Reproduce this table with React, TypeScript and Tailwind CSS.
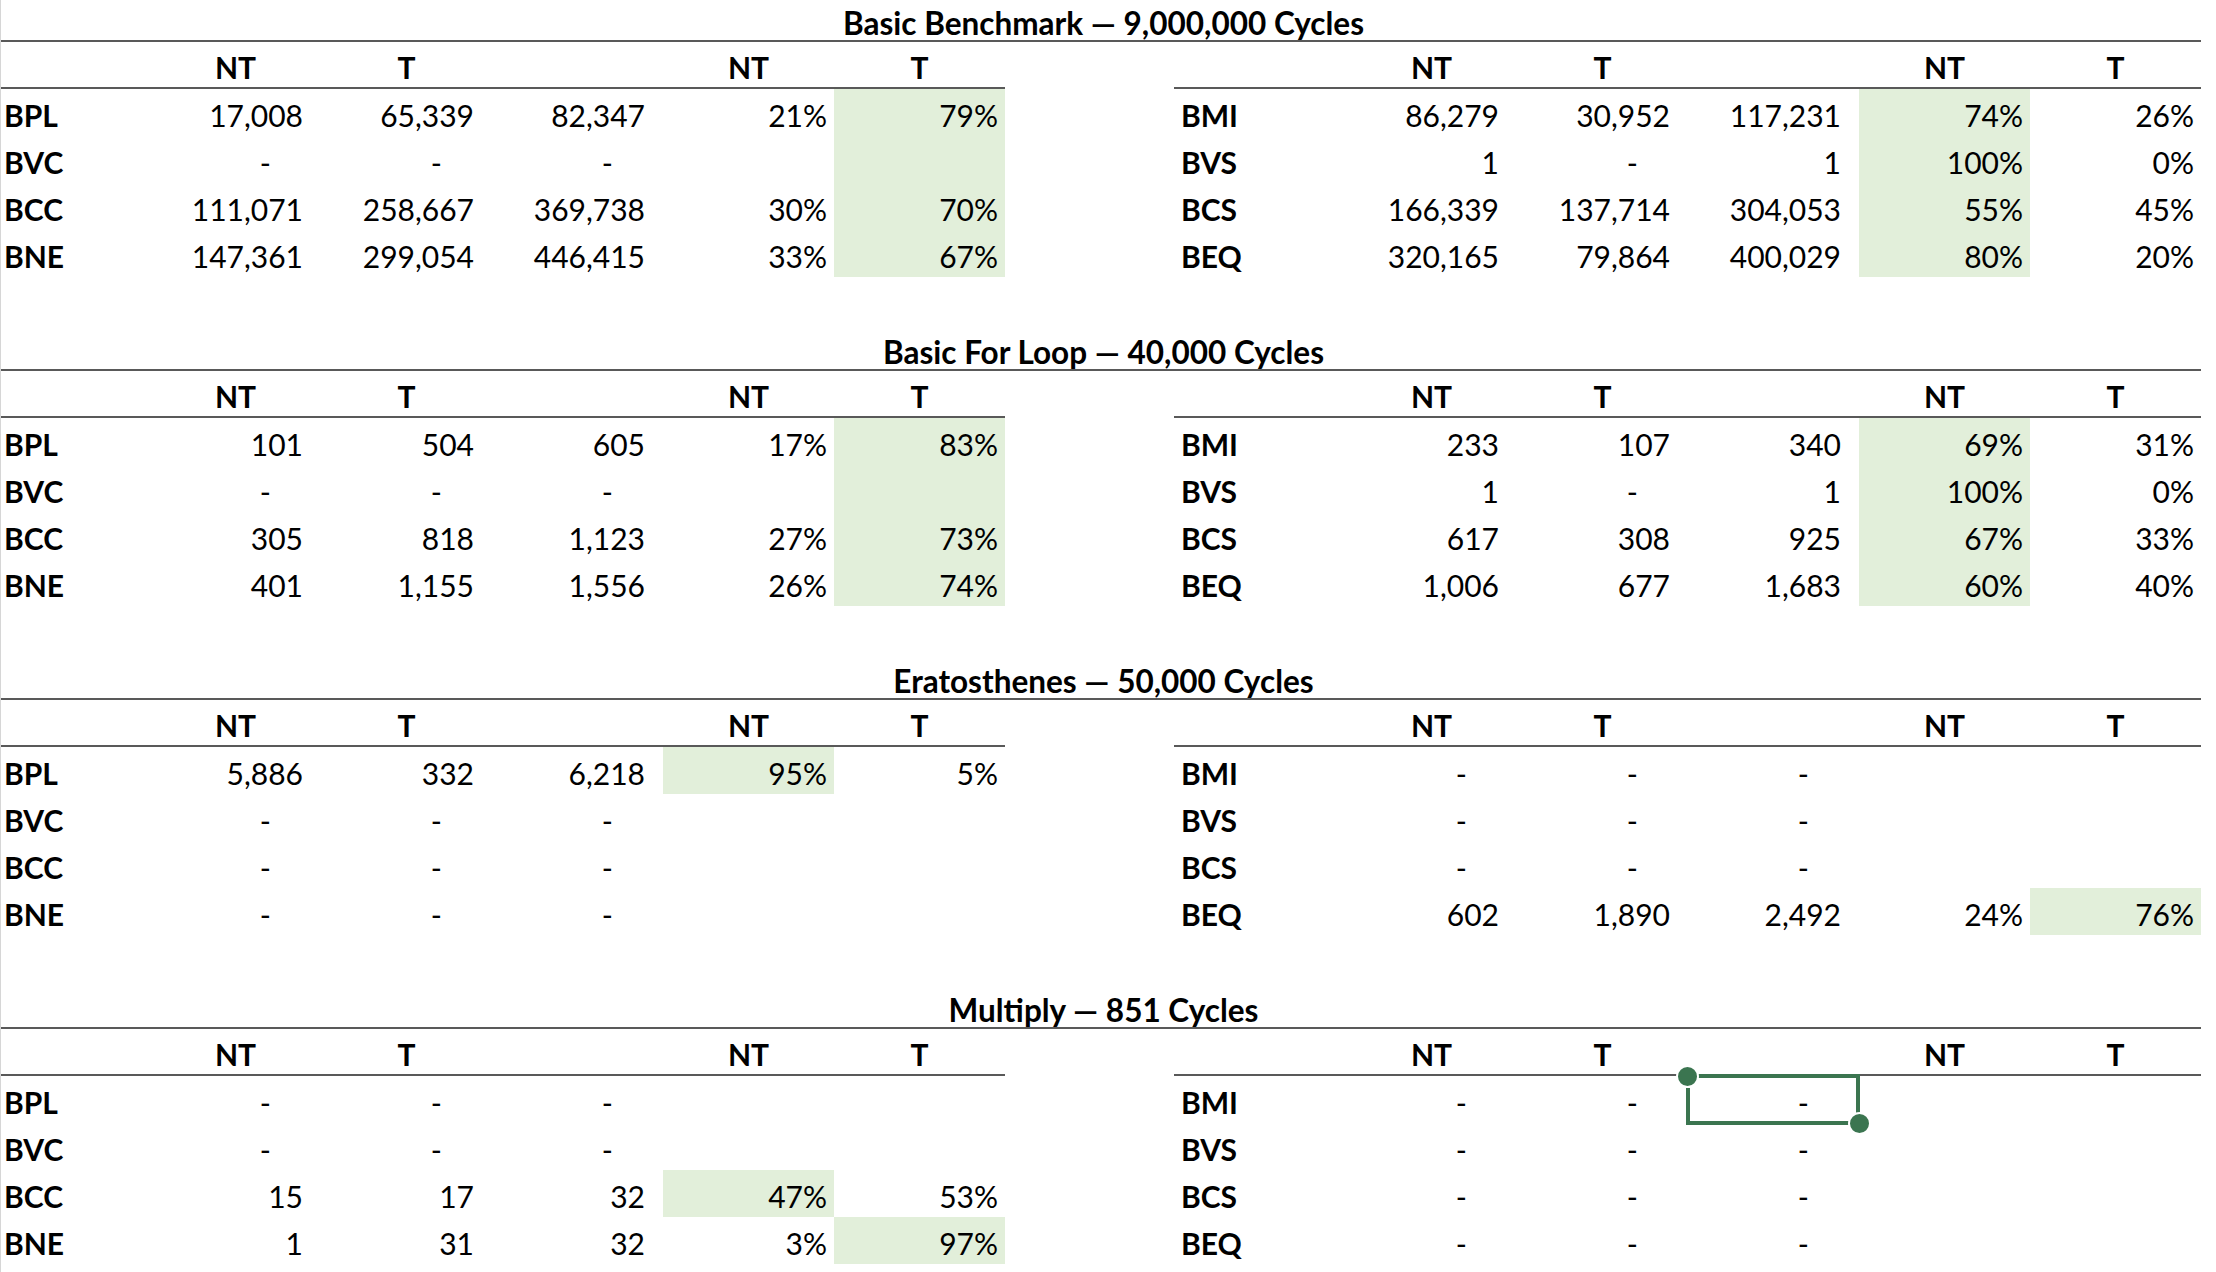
import React from "react";

type DataRow = { label: string; vals: string[]; g: number[] };
type Section = { title: string; left: DataRow[]; right: DataRow[] };

const D = ["-", "-", "-", "", ""];

const sections: Section[] = [
  {
    title: "Basic Benchmark — 9,000,000 Cycles",
    left: [
      { label: "BPL", vals: ["17,008", "65,339", "82,347", "21%", "79%"], g: [4] },
      { label: "BVC", vals: D, g: [4] },
      { label: "BCC", vals: ["111,071", "258,667", "369,738", "30%", "70%"], g: [4] },
      { label: "BNE", vals: ["147,361", "299,054", "446,415", "33%", "67%"], g: [4] },
    ],
    right: [
      { label: "BMI", vals: ["86,279", "30,952", "117,231", "74%", "26%"], g: [3] },
      { label: "BVS", vals: ["1", "-", "1", "100%", "0%"], g: [3] },
      { label: "BCS", vals: ["166,339", "137,714", "304,053", "55%", "45%"], g: [3] },
      { label: "BEQ", vals: ["320,165", "79,864", "400,029", "80%", "20%"], g: [3] },
    ],
  },
  {
    title: "Basic For Loop — 40,000 Cycles",
    left: [
      { label: "BPL", vals: ["101", "504", "605", "17%", "83%"], g: [4] },
      { label: "BVC", vals: D, g: [4] },
      { label: "BCC", vals: ["305", "818", "1,123", "27%", "73%"], g: [4] },
      { label: "BNE", vals: ["401", "1,155", "1,556", "26%", "74%"], g: [4] },
    ],
    right: [
      { label: "BMI", vals: ["233", "107", "340", "69%", "31%"], g: [3] },
      { label: "BVS", vals: ["1", "-", "1", "100%", "0%"], g: [3] },
      { label: "BCS", vals: ["617", "308", "925", "67%", "33%"], g: [3] },
      { label: "BEQ", vals: ["1,006", "677", "1,683", "60%", "40%"], g: [3] },
    ],
  },
  {
    title: "Eratosthenes — 50,000 Cycles",
    left: [
      { label: "BPL", vals: ["5,886", "332", "6,218", "95%", "5%"], g: [3] },
      { label: "BVC", vals: D, g: [] },
      { label: "BCC", vals: D, g: [] },
      { label: "BNE", vals: D, g: [] },
    ],
    right: [
      { label: "BMI", vals: D, g: [] },
      { label: "BVS", vals: D, g: [] },
      { label: "BCS", vals: D, g: [] },
      { label: "BEQ", vals: ["602", "1,890", "2,492", "24%", "76%"], g: [4] },
    ],
  },
  {
    title: "Multiply — 851 Cycles",
    left: [
      { label: "BPL", vals: D, g: [] },
      { label: "BVC", vals: D, g: [] },
      { label: "BCC", vals: ["15", "17", "32", "47%", "53%"], g: [3] },
      { label: "BNE", vals: ["1", "31", "32", "3%", "97%"], g: [4] },
    ],
    right: [
      { label: "BMI", vals: D, g: [] },
      { label: "BVS", vals: D, g: [] },
      { label: "BCS", vals: D, g: [] },
      { label: "BEQ", vals: D, g: [] },
    ],
  },
];

function Selection() {
  return (
    <>
      <div className="pointer-events-none absolute -left-[2px] -top-[2px] -right-[1px] -bottom-[2px] border-4 border-[#3b7550]" />
      <div className="absolute -left-[12px] -top-[11px] w-[23px] h-[23px] rounded-full bg-[#3b7550] border-[2px] border-white" />
      <div className="absolute -right-[12px] -bottom-[12px] w-[23px] h-[23px] rounded-full bg-[#3b7550] border-[2px] border-white" />
    </>
  );
}

function ValueCell({ v, green, sel }: { v: string; green: boolean; sel?: boolean }) {
  const pad = v === "-" ? "pr-[50px]" : v.endsWith("%") ? "pr-[7px]" : "pr-[18px]";
  return (
    <div
      className={`relative w-[171px] h-full flex items-end justify-end pb-[6px] ${pad} ${
        green ? "bg-[#e2efda]" : ""
      }`}
    >
      {v}
      {sel ? <Selection /> : null}
    </div>
  );
}

function Block({ row, right, selCol }: { row: DataRow; right?: boolean; selCol?: number }) {
  return (
    <div className="flex h-full">
      <div
        className={`${right ? "w-[172px] pl-[7px]" : "w-[150px] pl-[4px]"} h-full flex items-end pb-[6px] font-bold`}
      >
        {row.label}
      </div>
      {row.vals.map((v, i) => (
        <ValueCell key={i} v={v} green={row.g.includes(i)} sel={selCol === i} />
      ))}
    </div>
  );
}

function HeaderBlock({ right }: { right?: boolean }) {
  const heads = ["NT", "T", "", "NT", "T"];
  return (
    <div className="flex h-full border-b-2 border-[#595959]">
      <div className={`${right ? "w-[172px]" : "w-[150px]"}`} />
      {heads.map((h, i) => (
        <div key={i} className="w-[171px] flex items-end justify-center pb-[5px] font-bold">
          {h}
        </div>
      ))}
    </div>
  );
}

function SectionView({ s, last }: { s: Section; last?: boolean }) {
  return (
    <div>
      <div className="h-[47px] w-[2201px] border-b-2 border-[#595959] flex items-end justify-center pb-[1px] pl-[6px] font-bold text-[31.5px] leading-[31px]">
        {s.title}
      </div>
      <div className="h-[47px] flex">
        <HeaderBlock />
        <div className="w-[169px]" />
        <HeaderBlock right />
      </div>
      {s.left.map((r, i) => (
        <div key={i} className="h-[47px] flex">
          <Block row={r} />
          <div className="w-[169px]" />
          <Block row={s.right[i]} right selCol={last && i === 0 ? 2 : undefined} />
        </div>
      ))}
      <div className="h-[47px]" />
    </div>
  );
}

export default function App() {
  return (
    <div className="w-[2216px] h-[1272px] overflow-hidden bg-white border-l border-[#d6d6d6] text-black text-[30px] leading-[30px] font-['Lato','Liberation_Sans',sans-serif]">
      <div className="-mt-[5px] -ml-[1px]">
        {sections.map((s, i) => (
          <SectionView key={i} s={s} last={i === sections.length - 1} />
        ))}
      </div>
    </div>
  );
}
